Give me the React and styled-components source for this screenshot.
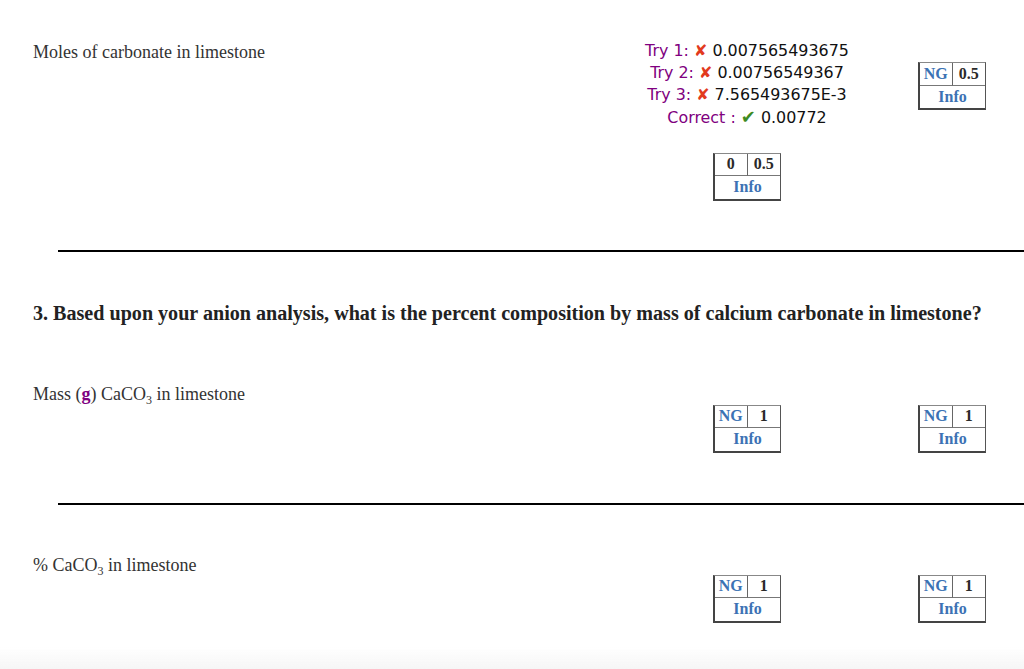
import React from "react";
import styled, { createGlobalStyle } from "styled-components";

const GlobalStyle = createGlobalStyle`
  html, body {
    margin: 0;
    padding: 0;
    background: #fff;
  }
  body {
    font-family: "Liberation Serif", "Times New Roman", serif;
    color: #222;
  }
`;

const Page = styled.div`
  width: 1024px;
  box-sizing: border-box;
  padding: 41px 0 40px 33px;
`;

const Row = styled.div`
  display: grid;
  grid-template-columns: 1fr 266px 144px;
  align-items: start;
  margin-top: ${(p) => p.$top || 0}px;
`;

const Label = styled.div`
  padding-top: 1px;
  font-size: 18px;
  line-height: 20px;
  color: #333;

  sub {
    font-size: 12px;
    line-height: 0;
    vertical-align: -4px;
  }
  b {
    color: #800080;
  }
`;

const Cell = styled.div`
  display: flex;
  flex-direction: column;
  align-items: center;
`;

const Tries = styled.div`
  margin-top: -1.5px;
  font-family: "DejaVu Sans", Verdana, sans-serif;
  font-size: 15.9px;
  line-height: 22.3px;
  text-align: center;
  color: #111;
`;

const TryLine = styled.div`
  height: 22.3px;
`;

const TryName = styled.span`
  color: #800080;
`;

const Mark = styled.span`
  color: ${(p) => (p.$ok ? "#3d8b23" : "#e23a1e")};
  font-size: ${(p) => (p.$ok ? "18px" : "inherit")};
`;

const Box = styled.div`
  margin-top: ${(p) => p.$top || 21}px;
  width: 68px;
  height: 48px;
  box-sizing: border-box;
  display: grid;
  grid-template-columns: 1fr 1fr;
  grid-template-rows: 1fr 1fr;
  border-top: 1px solid #888;
  border-left: 2px solid #444;
  border-right: 1px solid #555;
  border-bottom: 2px solid #444;
  font-family: "Liberation Serif", "Times New Roman", serif;
  font-weight: bold;
  font-size: 16px;
`;

const BoxCell = styled.div`
  display: flex;
  align-items: center;
  justify-content: center;
  color: ${(p) => (p.$blue ? "#3c72b4" : "#2a2a2a")};
  border-bottom: ${(p) => (p.$wide ? "none" : "1px solid #777")};
  border-right: ${(p) => (p.$divider ? "1px solid #666" : "none")};
  grid-column: ${(p) => (p.$wide ? "1 / span 2" : "auto")};
`;

const Rule = styled.hr`
  margin: ${(p) => p.$top}px 0 0 25px;
  border: none;
  border-top: 2px solid #000;
  height: 0;
`;

const Question = styled.h3`
  margin: 50px 0 0 0;
  font-size: 20.1px;
  line-height: 23px;
  font-weight: bold;
  color: #222;
`;

const Fade = styled.div`
  position: fixed;
  left: 0;
  right: 0;
  bottom: 0;
  height: 22px;
  pointer-events: none;
  background: linear-gradient(to bottom, rgba(247, 247, 247, 0), #f6f6f6);
`;

function ScoreBox({ left, right, blueLeft, top }) {
  return (
    <Box $top={top}>
      <BoxCell $blue={blueLeft} $divider>{left}</BoxCell>
      <BoxCell>{right}</BoxCell>
      <BoxCell $blue $wide>Info</BoxCell>
    </Box>
  );
}

const tries = [
  { name: "Try 1:", value: "0.007565493675" },
  { name: "Try 2:", value: "0.00756549367" },
  { name: "Try 3:", value: "7.565493675E-3" },
];

export default function App() {
  return (
    <Page>
      <GlobalStyle />

      <Row>
        <Label>Moles of carbonate in limestone</Label>
        <Cell>
          <Tries>
            {tries.map((t) => (
              <TryLine key={t.name}>
                <TryName>{t.name}</TryName> <Mark>✘</Mark> {t.value}
              </TryLine>
            ))}
            <TryLine>
              <TryName>Correct :</TryName> <Mark $ok>✔</Mark> 0.00772
            </TryLine>
          </Tries>
          <ScoreBox left="0" right="0.5" top={24} />
        </Cell>
        <Cell>
          <ScoreBox left="NG" right="0.5" blueLeft />
        </Cell>
      </Row>

      <Rule $top={49} />

      <Question>
        3. Based upon your anion analysis, what is the percent composition by mass of calcium carbonate in limestone?
      </Question>

      <Row $top={58}>
        <Label>
          Mass (<b>g</b>) CaCO<sub>3</sub> in limestone
        </Label>
        <Cell>
          <ScoreBox left="NG" right="1" blueLeft top={22} />
        </Cell>
        <Cell>
          <ScoreBox left="NG" right="1" blueLeft top={22} />
        </Cell>
      </Row>

      <Rule $top={50} />

      <Row $top={49}>
        <Label>
          % CaCO<sub>3</sub> in limestone
        </Label>
        <Cell>
          <ScoreBox left="NG" right="1" blueLeft />
        </Cell>
        <Cell>
          <ScoreBox left="NG" right="1" blueLeft />
        </Cell>
      </Row>

      <Fade />
    </Page>
  );
}
